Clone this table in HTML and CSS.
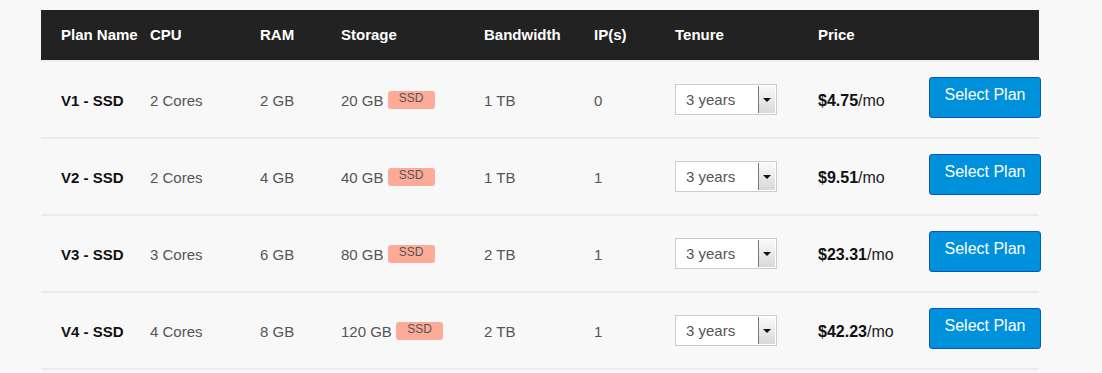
FILE: index.html
```html
<!DOCTYPE html>
<html lang="en">
<head>
    <meta charset="UTF-8">
    <meta name="viewport" content="width=device-width, initial-scale=1.0">
    <title>VPS Plans</title>
    <link rel="stylesheet" href="styles.css">
</head>
<body>

    <div class="plans">
        <!-- Table header -->
        <div class="plan-row plan-head">
            <div>Plan Name</div>
            <div>CPU</div>
            <div>RAM</div>
            <div>Storage</div>
            <div>Bandwidth</div>
            <div>IP(s)</div>
            <div>Tenure</div>
            <div>Price</div>
            <div></div>
        </div>

        <div class="plan-row">
            <div class="plan-name">V1 - SSD</div>
            <div>2 Cores</div>
            <div>2 GB</div>
            <div>20 GB <span class="badge">SSD</span></div>
            <div>1 TB</div>
            <div>0</div>
            <div><div class="tenure"><span class="tenure-value">3 years</span><span class="tenure-arrow"></span></div></div>
            <div class="price"><b>$4.75</b>/mo</div>
            <div><button>Select Plan</button></div>
        </div>

        <div class="plan-row">
            <div class="plan-name">V2 - SSD</div>
            <div>2 Cores</div>
            <div>4 GB</div>
            <div>40 GB <span class="badge">SSD</span></div>
            <div>1 TB</div>
            <div>1</div>
            <div><div class="tenure"><span class="tenure-value">3 years</span><span class="tenure-arrow"></span></div></div>
            <div class="price"><b>$9.51</b>/mo</div>
            <div><button>Select Plan</button></div>
        </div>

        <div class="plan-row">
            <div class="plan-name">V3 - SSD</div>
            <div>3 Cores</div>
            <div>6 GB</div>
            <div>80 GB <span class="badge">SSD</span></div>
            <div>2 TB</div>
            <div>1</div>
            <div><div class="tenure"><span class="tenure-value">3 years</span><span class="tenure-arrow"></span></div></div>
            <div class="price"><b>$23.31</b>/mo</div>
            <div><button>Select Plan</button></div>
        </div>

        <div class="plan-row">
            <div class="plan-name">V4 - SSD</div>
            <div>4 Cores</div>
            <div>8 GB</div>
            <div>120 GB <span class="badge">SSD</span></div>
            <div>2 TB</div>
            <div>1</div>
            <div><div class="tenure"><span class="tenure-value">3 years</span><span class="tenure-arrow"></span></div></div>
            <div class="price"><b>$42.23</b>/mo</div>
            <div><button>Select Plan</button></div>
        </div>
    </div>

</body>
</html>
```

FILE: styles.css
```css
body {
    font-family: 'Liberation Sans', Arial, sans-serif;
    background-color: #f8f8f8;
    margin: 0;
    padding: 10px 0 0 41px;
    color: #555;
    font-size: 15px;
}

.plans {
    width: 998px;
}

.plan-row {
    display: grid;
    grid-template-columns: 89px 110px 81px 143px 110px 81px 143px 111px 1fr;
    align-items: center;
    box-sizing: border-box;
    height: 77px;
    padding-left: 20px;
    padding-top: 2px;
    border-bottom: 2px solid #ebebeb;
}

.plan-head {
    height: 52px;
    padding-top: 0;
    padding-bottom: 2px;
    background-color: #222;
    color: #fff;
    font-weight: bold;
    border-bottom-color: #eee;
}

.plan-name {
    font-weight: bold;
    color: #111;
}

.badge {
    display: inline-block;
    vertical-align: top;
    width: 47px;
    height: 18px;
    margin-top: -1px;
    background-color: #fcab99;
    border-radius: 3px;
    color: #555;
    font-size: 12px;
    line-height: 14px;
    text-align: center;
}

/* Old style dropdown box */
.tenure {
    display: flex;
    width: 100px;
    height: 29px;
    border: 1px solid #ccc;
    background-color: #fff;
    margin-top: -2px;
}

.tenure-value {
    flex: 1;
    padding-left: 10px;
    line-height: 29px;
    color: #555;
}

.tenure-arrow {
    position: relative;
    width: 16px;
    margin: 1px 1px 1px 0;
    border-left: 1px solid #777;
    background: linear-gradient(#fafafa, #d8d8d8);
}

.tenure-arrow::after {
    content: "";
    position: absolute;
    left: 4px;
    top: 12px;
    border-left: 4px solid transparent;
    border-right: 4px solid transparent;
    border-top: 4px solid #111;
}

.price {
    font-size: 16px;
    color: #222;
}

.price b {
    color: #111;
}

button {
    width: 112px;
    height: 41px;
    margin-top: -7px;
    background-color: #0091dc;
    color: #fff;
    border: 1px solid #0a55c6;
    border-radius: 3px;
    font-family: 'Liberation Sans', Arial, sans-serif;
    font-size: 16px;
    padding: 0 0 4px;
    cursor: pointer;
}
```
